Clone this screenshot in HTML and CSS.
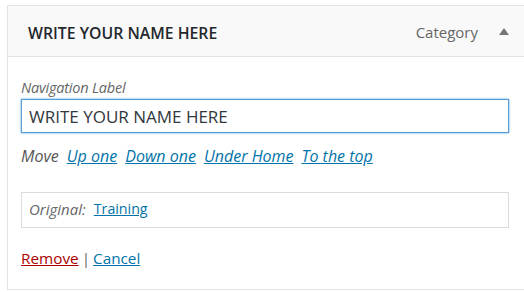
FILE: index.html
```html
<!DOCTYPE html>
<html lang="en">
<head>
<meta charset="utf-8">
<title>Menu item</title>
<link rel="stylesheet" href="styles.css">
</head>
<body>
<div class="menu-item">
  <div class="item-bar">
    <span class="item-title">WRITE YOUR NAME HERE</span>
    <span class="item-controls">
      <span class="item-type">Category</span>
      <svg class="item-toggle" width="10" height="7" viewBox="0 0 10 7" aria-hidden="true"><polygon points="5,0 10,7 0,7" fill="#72777c"/></svg>
    </span>
  </div>
  <div class="item-settings">
    <label class="field-label" for="nav-label">Navigation Label</label>
    <input class="field-input" id="nav-label" type="text" value="WRITE YOUR NAME HERE">
    <div class="move-row">
      <span class="move-label">Move</span>
      <a href="#" class="move-link">Up one</a>
      <a href="#" class="move-link">Down one</a>
      <a href="#" class="move-link">Under Home</a>
      <a href="#" class="move-link">To the top</a>
    </div>
    <div class="original-box">
      <span class="original-label">Original:</span>
      <a href="#" class="original-link">Training</a>
    </div>
    <div class="actions">
      <a href="#" class="remove-link">Remove</a><span class="sep">|</span><a href="#" class="cancel-link">Cancel</a>
    </div>
  </div>
</div>
</body>
</html>
```
FILE: styles.css
```css
html, body {
  margin: 0;
  padding: 0;
  background: #ffffff;
}
body {
  font-family: "Open Sans", "Noto Sans", sans-serif;
  font-size: 15px;
  color: #444;
  padding: 5px 0 0 7px;
}
.menu-item {
  border: 1px solid #e2e2e2;
  border-right: none;
  box-shadow: 0 1px 1px rgba(0,0,0,0.04);
  background: #fff;
}
.item-bar {
  display: flex;
  align-items: center;
  justify-content: space-between;
  height: 51px;
  background: #f9f9f9;
  border-bottom: 1px solid #e2e2e2;
  padding: 0 15px 0 20px;
  box-sizing: border-box;
}
.item-title {
  font-size: 15.8px;
  font-weight: 600;
  color: #23282d;
  padding-top: 3px;
}
.item-controls {
  display: flex;
  align-items: center;
}
.item-type {
  font-size: 15px;
  color: #666;
  margin-right: 21px;
  padding-top: 2px;
}
.item-toggle {
  display: block;
}
.item-settings {
  padding: 21px 15px 21px 13px;
}
.field-label {
  display: block;
  font-style: italic;
  font-size: 14.5px;
  letter-spacing: -0.2px;
  color: #666;
  line-height: 20px;
  margin-bottom: 1px;
}
.field-input {
  display: block;
  width: 100%;
  box-sizing: border-box;
  height: 34px;
  margin: 0;
  padding: 0 7px;
  font-family: "Open Sans", "Noto Sans", sans-serif;
  font-size: 17px;
  color: #32373c;
  border: 1px solid #5b9dd9;
  box-shadow: 0 0 2px rgba(30,140,190,0.8);
  outline: none;
  background: #fff;
}
.move-row {
  display: flex;
  gap: 8px;
  margin-top: 13px;
  line-height: 20px;
  font-size: 16px;
  font-style: italic;
}
.move-label {
  color: #555;
}
.move-link {
  color: #0073aa;
  text-decoration: underline;
}
.original-box {
  margin-top: 26px;
  border: 1px solid #dcdcdc;
  padding: 6px 7px 8px;
  line-height: 20px;
  display: flex;
  gap: 8px;
}
.original-label {
  font-style: italic;
  color: #666;
}
.original-link {
  font-size: 14.2px;
  color: #0073aa;
  text-decoration: underline;
}
.actions {
  margin-top: 20px;
  line-height: 20px;
  font-size: 15.3px;
}
.remove-link {
  color: #a00;
  text-decoration: underline;
}
.sep {
  color: #666;
  margin: 0 3px;
}
.cancel-link {
  color: #0073aa;
  text-decoration: underline;
}
```
